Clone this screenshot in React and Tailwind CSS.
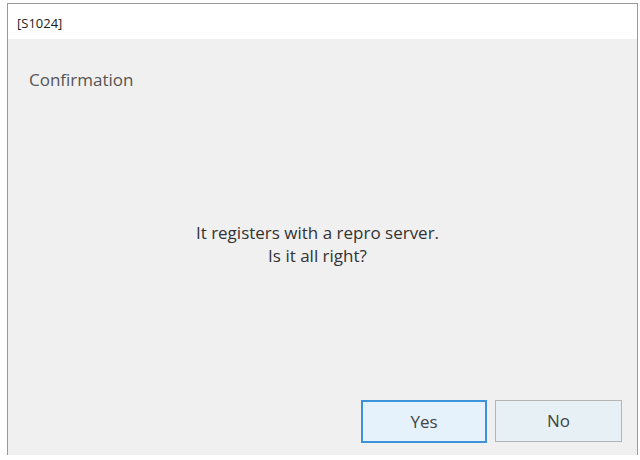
export default function App() {
    return (
        <div className="w-[640px] h-[460px] bg-white pt-[3px] pl-[7px] pr-[2px] pb-[5px] flex" style={{ fontFamily: '"Open Sans", "Noto Sans", sans-serif' }}>
            <div className="flex-1 flex flex-col border-l border-t border-r border-[#9a9a9a]">
                <div className="h-[35px] bg-white flex items-center pl-[9px] pt-[4px] text-[13px] text-[#222]">
                    [S1024]
                </div>
                <div className="flex-1 bg-[#f0f0f0] flex flex-col">
                    <div className="pl-[21px] pt-[29px] text-[17px] leading-[24px] text-[#555]">
                        Confirmation
                    </div>
                    <div className="flex-1 flex flex-col items-center justify-center pb-[4px] pr-[10px] text-[17px] leading-[23px] text-[#333]">
                        <div>It registers with a repro server.</div>
                        <div>Is it all right?</div>
                    </div>
                    <div className="flex justify-end gap-[8px] pr-[15px] pb-[12px]">
                        <button className="w-[126px] h-[43px] border-2 border-[#3d92d9] bg-[#e5f1fb] text-[17px] text-[#444]">
                            Yes
                        </button>
                        <button className="w-[127px] h-[42px] border border-[#b4b4b4] bg-[#e6f0f5] text-[17px] text-[#444]">
                            No
                        </button>
                    </div>
                </div>
            </div>
        </div>
    );
}
